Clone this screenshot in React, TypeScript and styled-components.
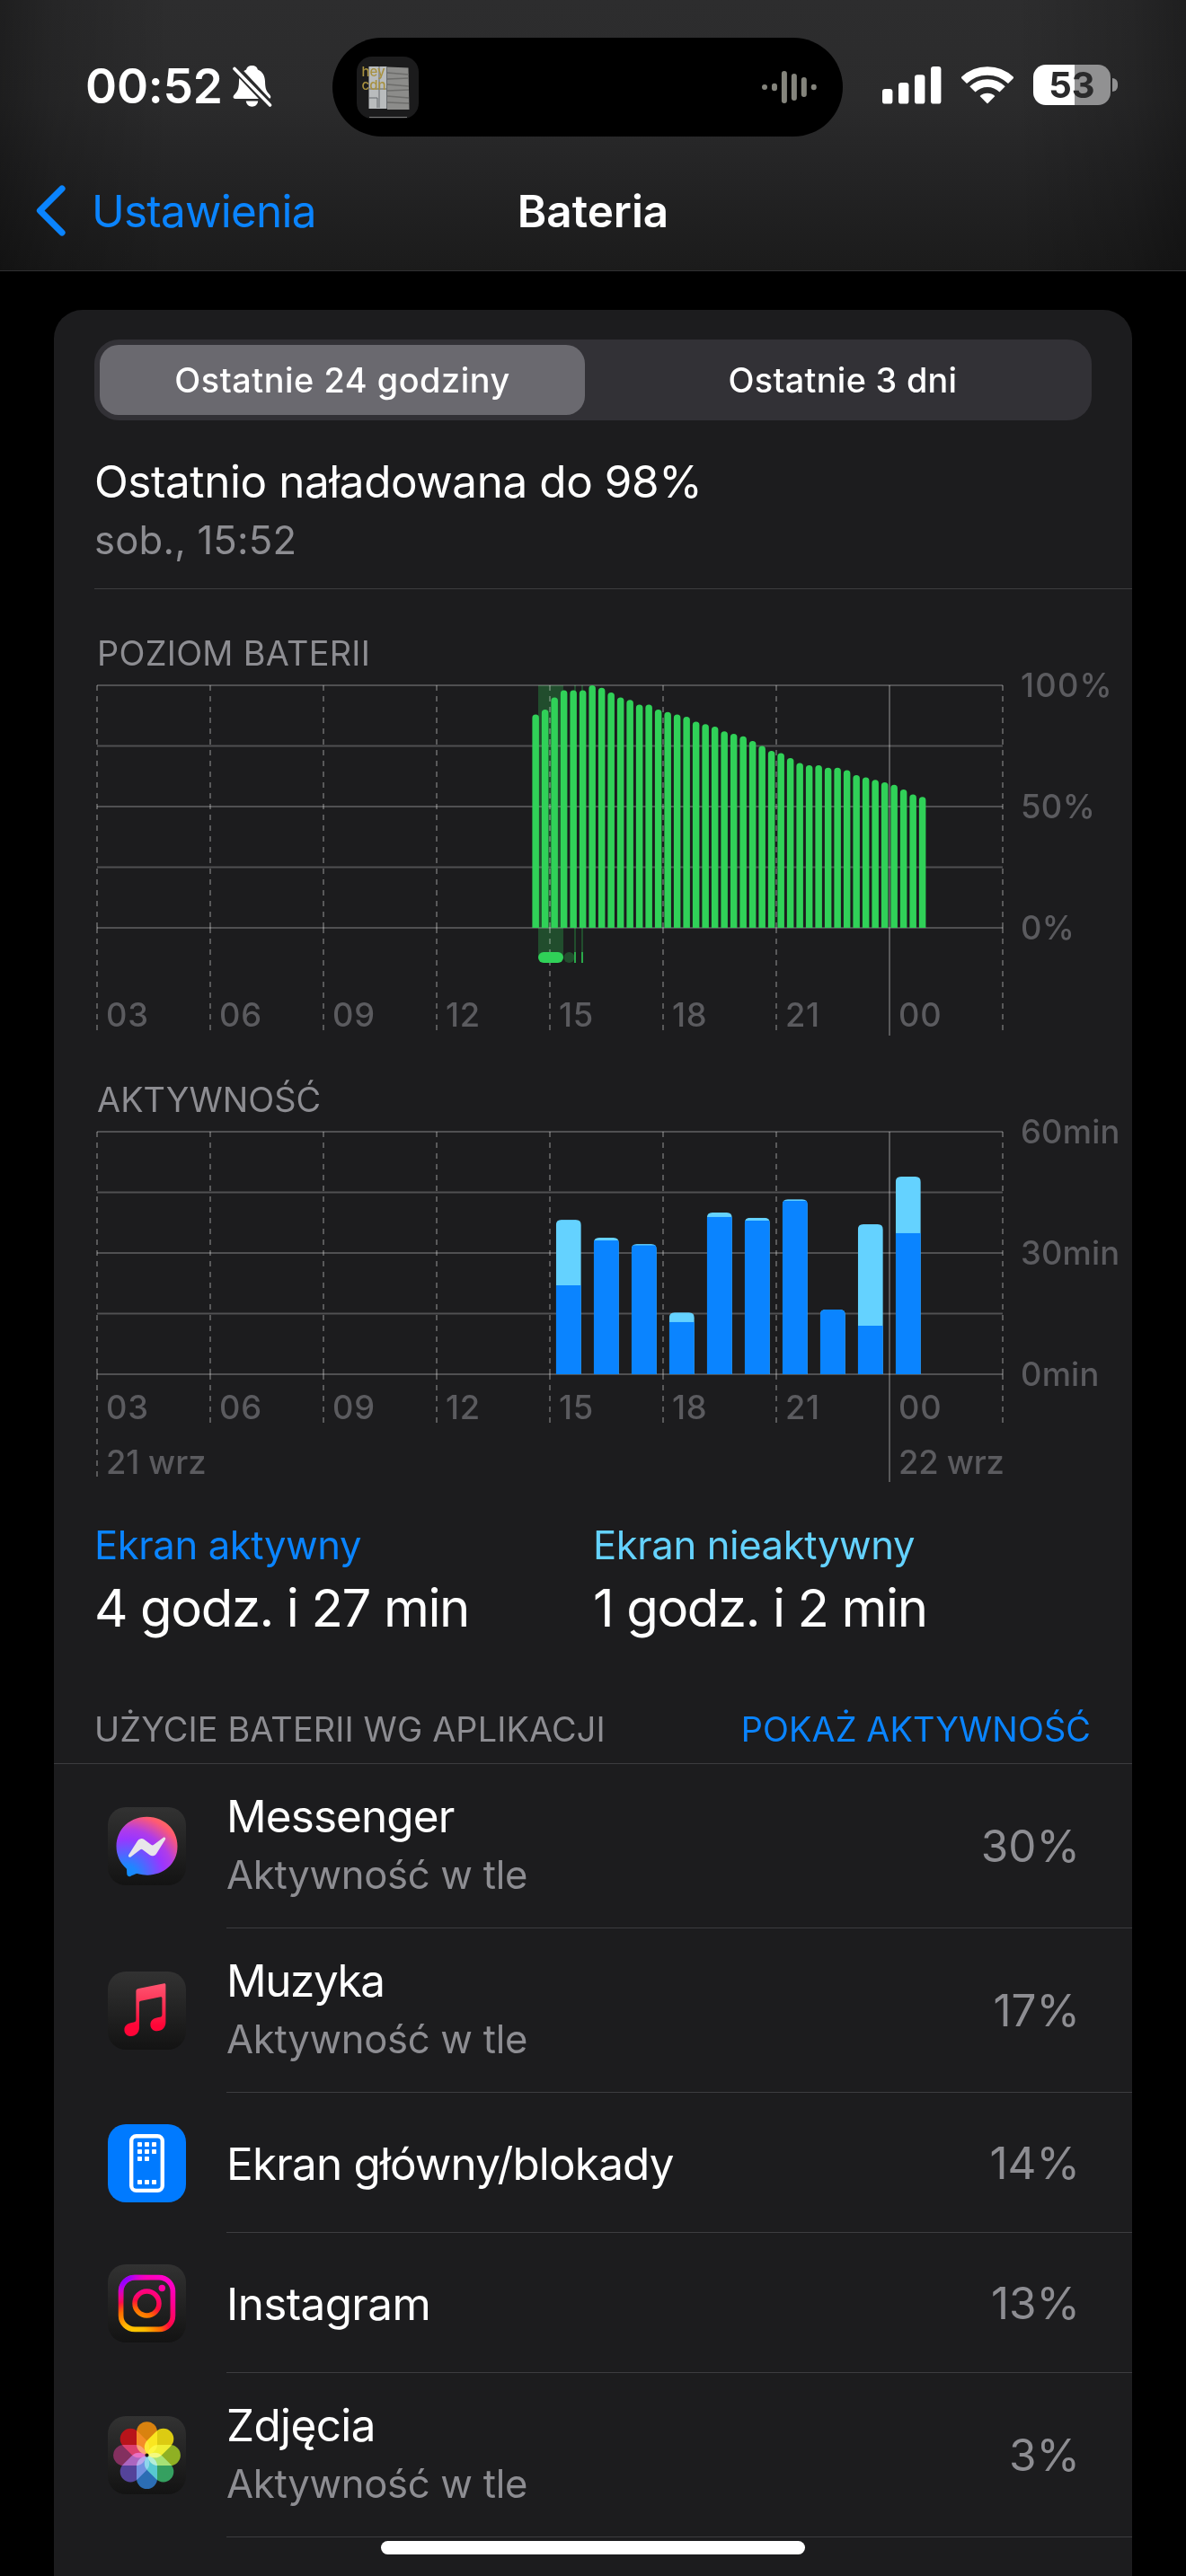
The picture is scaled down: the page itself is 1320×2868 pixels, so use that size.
import React from "react";
import styled, { createGlobalStyle } from "styled-components";

const GlobalStyle = createGlobalStyle`
  * {
    box-sizing: border-box;
  }
  html,
  body {
    margin: 0;
    background: #000;
  }
  body {
    font-family: Inter, "Noto Sans", sans-serif;
    color: #fff;
    -webkit-font-smoothing: antialiased;
  }
`;

const Screen = styled.div`
  position: relative;
  width: 1320px;
  height: 2868px;
  overflow: hidden;
  background: #000;
`;

/* ---------- header ---------- */

const Header = styled.header`
  height: 302px;
  border-bottom: 1px solid #303032;
  background: linear-gradient(
      90deg,
      rgba(0, 0, 0, 0.32) 0,
      rgba(0, 0, 0, 0.16) 60px,
      transparent 190px,
      transparent 1130px,
      rgba(0, 0, 0, 0.16) 1260px,
      rgba(0, 0, 0, 0.32) 100%
    ),
    linear-gradient(180deg, #2d2d2e 0, #2b2b2c 110px, #242425 190px, #1b1b1b 100%);
`;

const StatusBar = styled.div`
  display: grid;
  grid-template-columns: 370px 568px 1fr;
  align-items: center;
  height: 168px;
  padding-top: 24px;
`;

const StatusLeft = styled.div`
  display: flex;
  align-items: center;
  gap: 11px;
  padding-left: 95px;
`;

const Clock = styled.span`
  font-size: 53.2px;
  font-weight: 600;
  line-height: 60px;
  letter-spacing: -0.18px;
`;

const Island = styled.div`
  display: flex;
  align-items: center;
  justify-content: space-between;
  height: 110px;
  margin-top: 2px;
  padding: 0 29px 0 27px;
  border-radius: 55px;
  background: #000;
`;

const StatusRight = styled.div`
  display: flex;
  align-items: center;
  padding: 0 0 3px 44px;
`;

const SignalIcon = styled.svg`
  margin-right: 22px;
`;

const WifiIcon = styled.svg`
  margin-right: 22px;
`;

const BatteryBody = styled.div`
  display: flex;
  align-items: center;
  justify-content: center;
  width: 86px;
  height: 45px;
  border-radius: 14px;
  background: linear-gradient(90deg, #fff 53%, #919192 53%);
  color: #2a2a2b;
  font-size: 40px;
  font-weight: 700;
  line-height: 45px;
`;

const BatteryTip = styled.div`
  width: 6px;
  height: 15px;
  margin-left: 2px;
  border-radius: 0 6px 6px 0;
  background: #919192;
`;

const NavBar = styled.nav`
  display: grid;
  grid-template-columns: 1fr auto 1fr;
  align-items: center;
  height: 133px;
`;

const BackLink = styled.a`
  display: flex;
  align-items: center;
  gap: 29px;
  padding-left: 40px;
  color: #0a84ff;
  font-size: 49.4px;
  line-height: 60px;
  letter-spacing: -0.73px;
`;

const NavTitle = styled.h1`
  margin: 0;
  font-size: 49.4px;
  font-weight: 600;
  line-height: 60px;
`;

/* ---------- card ---------- */

const Card = styled.main`
  width: 1200px;
  margin: 43px auto 0;
  padding-top: 33px;
  border-radius: 32px 32px 0 0;
  background: #1c1c1e;
`;

const Segmented = styled.div`
  display: grid;
  grid-template-columns: 540px 540px;
  column-gap: 17px;
  width: 1110px;
  height: 90px;
  margin: 0 45px;
  padding: 6px;
  border-radius: 27px;
  background: #323136;
`;

const Segment = styled.button<{ $active?: boolean; $spacing: number }>`
  padding: 0;
  border: none;
  border-radius: 21px;
  background: ${({ $active }) => ($active ? "#6a696f" : "transparent")};
  color: #fff;
  font-family: inherit;
  font-size: 37.8px;
  font-weight: 500;
  line-height: 78px;
  letter-spacing: ${({ $spacing }) => $spacing}px;
`;

const Summary = styled.section`
  display: flex;
  flex-direction: column;
  gap: 8px;
  height: 188px;
  margin-left: 45px;
  padding-top: 37px;
  border-bottom: 1px solid #3c3c3f;
`;

const Title = styled.div<{ $spacing?: number }>`
  font-size: 49.4px;
  line-height: 62px;
  letter-spacing: ${({ $spacing = 0 }) => $spacing}px;
`;

const Subtitle = styled.div<{ $spacing?: number }>`
  color: #8d8d92;
  font-size: 43.6px;
  line-height: 54px;
  letter-spacing: ${({ $spacing = 0 }) => $spacing}px;
`;

const Caption = styled.h2<{ $spacing: number }>`
  margin: 0;
  color: #8d8d92;
  font-size: 37.8px;
  font-weight: 400;
  line-height: 46px;
  letter-spacing: ${({ $spacing }) => $spacing}px;
  white-space: nowrap;
`;

const ChartSection = styled.section<{ $top: number }>`
  padding-top: ${({ $top }) => $top}px;

  ${Caption} {
    padding-left: 48px;
  }
`;

const ChartSvg = styled.svg`
  display: block;
  overflow: visible;
`;

const AxisLabel = styled.text<{ $spacing: number }>`
  fill: #5b5b5f;
  font-size: 36.3px;
  font-weight: 500;
  letter-spacing: ${({ $spacing }) => $spacing}px;
`;

const Totals = styled.section`
  display: grid;
  grid-template-columns: 555px 555px;
  padding: 32px 45px 0;
`;

const TotalLabel = styled.div<{ $color: string }>`
  color: ${({ $color }) => $color};
  font-size: 43.6px;
  line-height: 54px;
  letter-spacing: -0.4px;
`;

const TotalValue = styled.div`
  margin-top: 6px;
  font-size: 58.1px;
  line-height: 72px;
  letter-spacing: -1.4px;
`;

const ListHeader = styled.div`
  display: flex;
  justify-content: space-between;
  margin-top: 76px;
  padding: 0 46px 15px 45px;
  border-bottom: 1px solid #3c3c3f;
`;

const ToggleLink = styled.a`
  color: #0a84ff;
  font-size: 37.8px;
  line-height: 46px;
  letter-spacing: 0.1px;
`;

const AppRow = styled.div<{ $tall: boolean }>`
  display: flex;
  align-items: center;
  gap: 45px;
  height: ${({ $tall }) => ($tall ? 183 : 156)}px;
  padding-left: 60px;
`;

const AppBody = styled.div`
  display: flex;
  flex: 1;
  align-items: center;
  justify-content: space-between;
  align-self: stretch;
  padding-right: 58px;
  border-bottom: 1px solid #3c3c3f;
`;

const AppText = styled.div<{ $tall: boolean }>`
  display: flex;
  flex-direction: column;
  gap: 8px;
  padding: ${({ $tall }) => ($tall ? "0 0 5px" : "2px 0 0")};
`;

const Percent = styled.span`
  color: #8d8d92;
  font-size: 49.4px;
  line-height: 62px;
`;

const IconTile = styled.svg`
  flex: none;
  width: 87px;
  height: 87px;
  border-radius: 20px;
  background: linear-gradient(180deg, #323232, #131313);
`;

const HomeIndicator = styled.div`
  position: absolute;
  left: 424px;
  bottom: 24px;
  width: 472px;
  height: 15px;
  border-radius: 8px;
  background: #fff;
`;

/* ---------- chart data ---------- */

const HOURS = ["03", "06", "09", "12", "15", "18", "21", "00"];
const STEP = 126;
const PLOT_WIDTH = STEP * 8;
const PLOT_HEIGHT = 270;
const GRID = "rgba(255, 255, 255, 0.23)";
const DASH = "rgba(255, 255, 255, 0.27)";

// battery percentage, one sample per 15 minutes
const LEVELS = [
  88, 90, 95, 98, 98, 98, 100, 99, 97, 95, 94, 92, 92, 90, 89, 88, 87, 85, 84,
  83, 81, 80, 79, 77, 75, 73, 72, 70, 68, 67, 67, 66, 66, 65, 63, 62, 61, 60,
  59, 57, 55, 54,
];

// minutes per hour: [total, screen on]
const ACTIVITY = [
  [38.2, 22],
  [33.8, 33.1],
  [32.2, 31.9],
  [15.3, 12.9],
  [40, 38.9],
  [38.7, 38],
  [43.3, 42.9],
  [16, 16],
  [37.1, 12],
  [48.9, 34.9],
];

interface GridProps {
  bottom: number;
  solidBottom: number;
  firstBottom?: number;
}

const ChartGrid: React.FC<GridProps> = ({ bottom, solidBottom, firstBottom }) => (
  <g strokeWidth={2} fill="none">
    {[0, 1, 2, 3, 4].map((i) => (
      <line
        key={i}
        x1={0}
        x2={PLOT_WIDTH}
        y1={i * 67.5}
        y2={i * 67.5}
        stroke={GRID}
      />
    ))}
    {Array.from({ length: 9 }, (_, i) => {
      const x = i * STEP;
      if (i === 7) {
        return (
          <line key={i} x1={x} x2={x} y1={0} y2={solidBottom} stroke={DASH} />
        );
      }
      const end = i === 0 && firstBottom ? firstBottom : bottom;
      return (
        <path
          key={i}
          d={`M${x} 0V${PLOT_HEIGHT}M${x} ${PLOT_HEIGHT}V${end}`}
          stroke={DASH}
          strokeDasharray="6 6"
        />
      );
    })}
  </g>
);

const HourLabels: React.FC<{ y: number }> = ({ y }) => (
  <>
    {HOURS.map((h, i) => (
      <AxisLabel key={h} x={i * STEP + 10} y={y} $spacing={0.7}>
        {h}
      </AxisLabel>
    ))}
  </>
);

const LevelChart = () => (
  <ChartSvg width={1200} height={410} viewBox="-48 -13 1200 410">
    <g fill="#30d158">
      <g opacity={0.27}>
        <rect x={491} y={0} width={28} height={303} />
        <rect x={531} y={0} width={2} height={309} />
        <rect x={539} y={0} width={2} height={309} />
        <rect x={519.5} y={297} width={12} height={12} rx={6} />
      </g>
      <rect x={531.3} y={297} width={1.4} height={12} />
      <rect x={539.3} y={297} width={1.4} height={12} />
    </g>
    <ChartGrid bottom={384} solidBottom={390} />
    <g fill="#30d158">
      <rect x={491} y={297} width={28} height={12} rx={6} />
      {LEVELS.map((v, i) => {
        const x = 484.4 + i * 10.5;
        const top = PLOT_HEIGHT * (1 - v / 100);
        return (
          <path
            key={i}
            d={`M${x} ${PLOT_HEIGHT}V${top + 3.75}a3.75 3.75 0 0 1 7.5 0V${PLOT_HEIGHT}z`}
          />
        );
      })}
    </g>
    <HourLabels y={380.2} />
    <AxisLabel x={1028} y={13.3} $spacing={1.2}>
      100%
    </AxisLabel>
    <AxisLabel x={1028} y={148.3} $spacing={0.4}>
      50%
    </AxisLabel>
    <AxisLabel x={1028} y={283.3} $spacing={0.2}>
      0%
    </AxisLabel>
  </ChartSvg>
);

const ActivityChart = () => (
  <ChartSvg width={1200} height={415} viewBox="-48 -13 1200 415">
    <ChartGrid bottom={324} solidBottom={390} firstBottom={384} />
    {ACTIVITY.map(([total, on], i) => {
      const x = 510.8 + i * 42;
      const top = PLOT_HEIGHT - total * 4.5;
      const split = PLOT_HEIGHT - on * 4.5;
      return (
        <g key={i}>
          <clipPath id={`bar-${i}`}>
            <path
              d={`M${x} ${PLOT_HEIGHT}V${top + 6}q0 -6 6 -6h16q6 0 6 6V${PLOT_HEIGHT}z`}
            />
          </clipPath>
          <g clipPath={`url(#bar-${i})`}>
            <rect x={x} y={top} width={28} height={PLOT_HEIGHT - top} fill="#64d2ff" />
            <rect x={x} y={split} width={28} height={PLOT_HEIGHT - split} fill="#0a84ff" />
          </g>
        </g>
      );
    })}
    <HourLabels y={319.8} />
    <AxisLabel x={10} y={381} $spacing={0}>
      21 wrz
    </AxisLabel>
    <AxisLabel x={892} y={381} $spacing={-0.2}>
      22 wrz
    </AxisLabel>
    <AxisLabel x={1028} y={13.2} $spacing={0.2}>
      60min
    </AxisLabel>
    <AxisLabel x={1028} y={148.2} $spacing={0.2}>
      30min
    </AxisLabel>
    <AxisLabel x={1028} y={283.2} $spacing={0.2}>
      0min
    </AxisLabel>
  </ChartSvg>
);

/* ---------- status icons ---------- */

const BellSlash = () => (
  <svg width={44} height={46} viewBox="0 0 44 46">
    <mask id="bell-cut">
      <rect width={44} height={46} fill="#fff" />
      <path d="M-1 -1.5 44.5 47" stroke="#000" strokeWidth={9} />
    </mask>
    <g fill="#fff" mask="url(#bell-cut)">
      <path d="M21.5 0c-3.6 0-6 2-6.4 4.6C9.8 6.8 7.2 11.5 7 17.5c-.2 8.500-1.400 11-4.600 14.200C-.6 34.700.4 37 3 37h36.800c2.600 0 3.600-2.300.8-5.300-3.200-3.200-4.400-5.700-4.600-14.200-.2-6-2.800-10.700-8.100-12.900C27.500 2 25.100 0 21.500 0z" />
      <path d="M14.800 39.600h13.400c-.4 3.800-3 6.100-6.700 6.100s-6.300-2.300-6.700-6.100z" />
    </g>
    <path d="M2 3.500 41.500 44" stroke="#fff" strokeWidth={3.6} strokeLinecap="round" />
  </svg>
);

const AlbumArt = () => (
  <svg width={69} height={69} viewBox="0 0 69 69">
    <clipPath id="art">
      <rect width={69} height={69} rx={17} />
    </clipPath>
    <g clipPath="url(#art)">
      <rect width={69} height={69} fill="#1b1b1c" />
      <path d="M13.5 11h20v47h-20z" fill="#b9bcbd" />
      <path d="M34 11.5l23.5 1L58.5 59H34z" fill="#8c8c8a" />
      <path
        d="M34 18l24 2M34 25l24-1M34 31l24 2M34 38l24-1M34 44l24 2M34 51l24 1"
        stroke="#6d6d6b"
        strokeWidth={1.6}
      />
      <path d="M14 36h19M14 46h9v11M25 11v46M33.5 11v47" stroke="#65696c" fill="none" />
      <g fontSize={15} fontWeight={500} fill="#a8913f">
        <text x={5.5} y={22}>
          hey
        </text>
        <text x={5.5} y={37}>
          cdn
        </text>
      </g>
      <path d="M14 67.5h42" stroke="#777" />
    </g>
  </svg>
);

const Waveform = () => (
  <svg width={61} height={38} viewBox="0 0 61 38" fill="#84847c">
    {[6, 8.5, 36, 30, 22, 6.5].map((h, i) => (
      <rect key={i} x={i * 10.95} y={19 - h / 2} width={6} height={h} rx={3} />
    ))}
  </svg>
);

const Signal = () => (
  <SignalIcon width={66} height={42} viewBox="0 0 66 42" fill="#fff">
    {[16.5, 23.5, 32.3, 41.5].map((h, i) => (
      <rect key={i} x={i * 18} y={41.6 - h} width={11.4} height={h} rx={3.2} />
    ))}
  </SignalIcon>
);

const Wifi = () => (
  <WifiIcon width={58} height={44} viewBox="0 0 58 44" fill="none" stroke="#fff">
    <path d="M2.7 16.7A37.5 37.5 0 0 1 55.3 16.7" strokeWidth={9.4} />
    <path d="M12.4 26.4A23.5 23.5 0 0 1 45.6 26.4" strokeWidth={8.8} />
    <path
      d="M20.6 34A12.5 12.5 0 0 1 37.4 34L29.5 42q-.5.5-1 0z"
      fill="#fff"
      stroke="none"
    />
  </WifiIcon>
);

/* ---------- app icons ---------- */

const MessengerIcon = () => (
  <IconTile viewBox="0 0 87 87">
    <radialGradient id="msg" gradientUnits="userSpaceOnUse" cx={20} cy={78} r={74}>
      <stop offset="0" stopColor="#0a90ff" />
      <stop offset="0.18" stopColor="#1f86ff" />
      <stop offset="0.58" stopColor="#9a36ff" />
      <stop offset="0.72" stopColor="#b03ce8" />
      <stop offset="0.95" stopColor="#ff5a72" />
      <stop offset="1" stopColor="#ff6468" />
    </radialGradient>
    <path
      fill="url(#msg)"
      d="M43.5 10.700C24.300 10.700 9.500 24.700 9.500 43.600c0 9.900 4.100 18.500 10.700 24.400 1.100 1 .9 1.600 1.100 6.500a2.700 2.700 0 0 0 3.800 2.400c7.300-3.200 7.400-2.900 8.600-2.600C54.700 80.100 77.500 67.600 77.500 43.600c0-18.900-14.800-32.900-34-32.900z"
    />
    <path
      fill="#e8e6ea"
      transform="translate(8.4 9.6) scale(0.137)"
      d="M405.790 193.130l-73 115.570a37.370 37.370 0 0 1-53.910 9.930l-58.080-43.470a15 15 0 0 0-18 0l-78.370 59.440c-10.460 7.930-24.160-4.600-17.110-15.670l73-115.570a37.360 37.360 0 0 1 53.910-9.930l58.060 43.460a15 15 0 0 0 18 0l78.410-59.380c10.440-7.980 24.140 4.540 17.090 15.620z"
    />
  </IconTile>
);

const MusicIcon = () => (
  <IconTile viewBox="0 0 87 87">
    <linearGradient id="music" x1="0" y1="0" x2="0" y2="1">
      <stop offset="0" stopColor="#ff5470" />
      <stop offset="0.45" stopColor="#fb2d51" />
      <stop offset="0.8" stopColor="#ff0537" />
    </linearGradient>
    <path
      fill="url(#music)"
      d="M62.800 13.200 34 19c-1.800.4-2.600 1.300-2.600 3.100v31.200c0 1.900-.6 2.800-2.400 3.200l-2.600.5c-5 1-8 3.600-8 7.900 0 4 3.100 7.100 7.300 7.100 5.600 0 9.300-4 9.300-9.900V35c0-1.400.5-2 1.700-2.200L58.500 28.300c1.200-.3 1.900.2 1.900 1.400v18c0 1.900-.7 2.700-2.400 3.100l-2.700.5c-5 1-7.900 3.600-7.900 7.900 0 4 3 7.100 7.200 7.100 5.900 0 9.800-4 9.800-10V14.700c0-1.100-.6-1.700-1.600-1.500z"
    />
  </IconTile>
);

const HomeTile = styled(IconTile)`
  background: #007aff;
`;

const HomeScreenIcon = () => (
  <HomeTile viewBox="0 0 87 87">
    <rect
      x={26.2}
      y={13.3}
      width={34.6}
      height={60.6}
      rx={5.5}
      fill="none"
      stroke="#fff"
      strokeWidth={4.4}
    />
    <g fill="#fff">
      {[20, 28, 36, 62].map((y) =>
        [33, 41, 49].map((x) =>
          y === 36 && x === 49 ? null : (
            <rect key={`${x}-${y}`} x={x} y={y} width={5} height={5} rx={0.8} />
          )
        )
      )}
    </g>
  </HomeTile>
);

const InstagramIcon = () => (
  <IconTile viewBox="0 0 87 87">
    <radialGradient id="ig-warm" gradientUnits="userSpaceOnUse" cx={29} cy={80} r={72}>
      <stop offset="0" stopColor="#ffd000" />
      <stop offset="0.2" stopColor="#ffb800" />
      <stop offset="0.42" stopColor="#ff6a00" />
      <stop offset="0.56" stopColor="#ff0a3c" />
      <stop offset="0.78" stopColor="#ff0090" />
      <stop offset="1" stopColor="#ff00c8" />
    </radialGradient>
    <radialGradient id="ig-cool" gradientUnits="userSpaceOnUse" cx={14} cy={12} r={34}>
      <stop offset="0" stopColor="#7a00ff" />
      <stop offset="0.3" stopColor="#9a00ff" />
      <stop offset="1" stopColor="#ff00c8" stopOpacity="0" />
    </radialGradient>
    {["ig-warm", "ig-cool"].map((id) => (
      <g key={id} fill="none" stroke={`url(#${id})`}>
        <rect x={14.6} y={14.6} width={57.8} height={57.8} rx={15.5} strokeWidth={5.7} />
        <circle cx={43.5} cy={43.5} r={13.5} strokeWidth={5.5} />
        <circle cx={60.3} cy={26.5} r={3.7} fill={`url(#${id})`} stroke="none" />
      </g>
    ))}
  </IconTile>
);

const Flower = styled.g`
  isolation: isolate;
`;

const Petal = styled.rect`
  mix-blend-mode: screen;
`;

const PETALS = [
  "#d9820f",
  "#dccb12",
  "#8fb023",
  "#35a060",
  "#2b6db4",
  "#54439a",
  "#83305f",
  "#b8141a",
];

const PhotosIcon = () => (
  <IconTile viewBox="0 0 87 87">
    <Flower>
      {PETALS.map((color, i) => (
        <Petal
          key={color}
          x={32}
          y={6.2}
          width={23}
          height={36.5}
          rx={11.5}
          fill={color}
          transform={`rotate(${i * 45} 43.5 43.6)`}
        />
      ))}
    </Flower>
    <circle cx={43.5} cy={43.6} r={2} fill="#221a18" />
  </IconTile>
);

const EmptyIcon = () => <IconTile viewBox="0 0 87 87" />;

interface AppUsage {
  name: string;
  spacing: number;
  background?: boolean;
  percent: string;
  icon: React.FC;
}

const APPS: AppUsage[] = [
  { name: "Messenger", spacing: -0.86, background: true, percent: "30%", icon: MessengerIcon },
  { name: "Muzyka", spacing: -1.4, background: true, percent: "17%", icon: MusicIcon },
  { name: "Ekran główny/blokady", spacing: -0.8, percent: "14%", icon: HomeScreenIcon },
  { name: "Instagram", spacing: -0.6, percent: "13%", icon: InstagramIcon },
  { name: "Zdjęcia", spacing: -0.6, background: true, percent: "3%", icon: PhotosIcon },
  { name: "", spacing: 0, background: true, percent: "", icon: EmptyIcon },
];

const AppItem: React.FC<{ app: AppUsage }> = ({ app }) => {
  const Icon = app.icon;
  const tall = !!app.background;
  return (
    <AppRow $tall={tall}>
      <Icon />
      {app.name && (
        <AppBody>
          <AppText $tall={tall}>
            <Title $spacing={app.spacing}>{app.name}</Title>
            {tall && <Subtitle $spacing={-0.3}>Aktywność w tle</Subtitle>}
          </AppText>
          <Percent>{app.percent}</Percent>
        </AppBody>
      )}
    </AppRow>
  );
};

const App: React.FC = () => (
  <>
    <GlobalStyle />
    <Screen>
      <Header>
        <StatusBar>
          <StatusLeft>
            <Clock>00:52</Clock>
            <BellSlash />
          </StatusLeft>
          <Island>
            <AlbumArt />
            <Waveform />
          </Island>
          <StatusRight>
            <Signal />
            <Wifi />
            <BatteryBody>53</BatteryBody>
            <BatteryTip />
          </StatusRight>
        </StatusBar>
        <NavBar>
          <BackLink>
            <svg width={33} height={57} viewBox="0 0 33 57" fill="none">
              <path
                d="M29 4 4.5 28.5 29 53"
                stroke="#0a84ff"
                strokeWidth={7.2}
                strokeLinecap="round"
                strokeLinejoin="round"
              />
            </svg>
            Ustawienia
          </BackLink>
          <NavTitle>Bateria</NavTitle>
        </NavBar>
      </Header>

      <Card>
        <Segmented>
          <Segment $active $spacing={0.55}>
            Ostatnie 24 godziny
          </Segment>
          <Segment $spacing={0.3}>Ostatnie 3 dni</Segment>
        </Segmented>

        <Summary>
          <Title $spacing={-0.4}>Ostatnio naładowana do 98%</Title>
          <Subtitle $spacing={0.2}>sob., 15:52</Subtitle>
        </Summary>

        <ChartSection $top={48}>
          <Caption $spacing={0.3}>POZIOM BATERII</Caption>
          <LevelChart />
        </ChartSection>

        <ChartSection $top={41}>
          <Caption $spacing={0.05}>AKTYWNOŚĆ</Caption>
          <ActivityChart />
        </ChartSection>

        <Totals>
          <div>
            <TotalLabel $color="#0a84ff">Ekran aktywny</TotalLabel>
            <TotalValue>4 godz. i 27 min</TotalValue>
          </div>
          <div>
            <TotalLabel $color="#64d2ff">Ekran nieaktywny</TotalLabel>
            <TotalValue>1 godz. i 2 min</TotalValue>
          </div>
        </Totals>

        <ListHeader>
          <Caption $spacing={0.15}>UŻYCIE BATERII WG APLIKACJI</Caption>
          <ToggleLink>POKAŻ AKTYWNOŚĆ</ToggleLink>
        </ListHeader>

        {APPS.map((app) => (
          <AppItem key={app.name} app={app} />
        ))}
      </Card>

      <HomeIndicator />
    </Screen>
  </>
);

export default App;
